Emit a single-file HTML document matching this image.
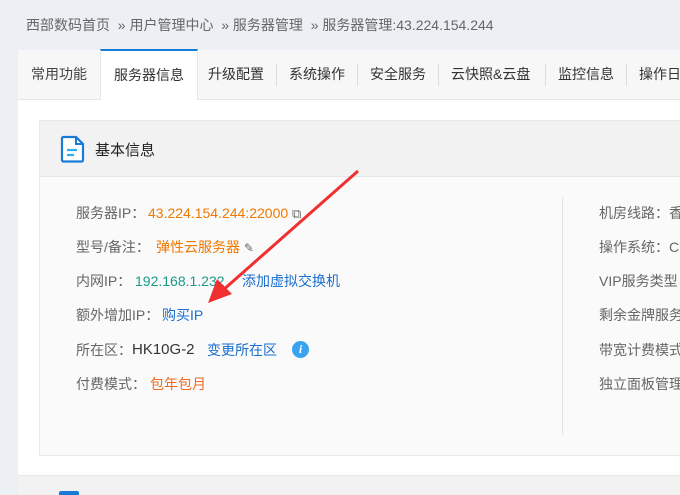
<html><head><style>
body{margin:0;width:680px;height:494px;overflow:hidden;background:#eceff3;font-family:"Liberation Sans","Noto Sans CJK SC",sans-serif;position:relative}
.a{position:absolute;white-space:nowrap}
.bc{top:15px;left:26px;font-size:14px;color:#666;line-height:20px}
.panel{position:absolute;left:18px;top:50px;width:662px;height:444px;background:#fff}
.tabs{position:absolute;left:0;top:0;width:662px;height:49px;background:#f7f7f7;border-bottom:1px solid #e6e6e6}
.tab{position:absolute;top:0;height:49px;line-height:49px;font-size:14px;color:#333;white-space:nowrap}
.sep{position:absolute;top:14px;width:1px;height:22px;background:#ddd}
.card{position:absolute;left:21px;top:70px;width:641px;height:334px;background:#fafafa;border:1px solid #e8e8e8;border-right:none}
.ch{position:absolute;left:0;top:0;width:641px;height:55px;background:#f2f2f2;border-bottom:1px solid #e6e6e6}
.r{font-size:14px;color:#666;line-height:20px;height:20px}
</style></head><body>
<div class="a bc">西部数码首页 &nbsp;» 用户管理中心 &nbsp;» 服务器管理 &nbsp;» 服务器管理:43.224.154.244</div>
<div class="panel">
<div class="tabs">
<div class="tab" style="left:13px;color:#444">常用功能</div>
<div class="tab" style="left:82px;width:96px;background:#fff;border-top:2px solid #1a7bd6;height:49px;top:-1px;text-align:center;line-height:48px;border-left:1px solid #e6e6e6;border-right:1px solid #e6e6e6">服务器信息</div>
<div class="tab" style="left:190px">升级配置</div><div class="sep" style="left:258px"></div>
<div class="tab" style="left:271px">系统操作</div><div class="sep" style="left:339px"></div>
<div class="tab" style="left:352px">安全服务</div><div class="sep" style="left:420px"></div>
<div class="tab" style="left:433px">云快照&amp;云盘</div><div class="sep" style="left:527px"></div>
<div class="tab" style="left:540px">监控信息</div><div class="sep" style="left:608px"></div>
<div class="tab" style="left:621px">操作日志</div>
</div>
<div class="card">
<div class="ch">
<svg class="a" style="left:20px;top:14px" width="26" height="28" viewBox="0 0 26 28"><path d="M3 2h13l7 7v16a1.5 1.5 0 0 1-1.5 1.5h-18A1.5 1.5 0 0 1 2 25V3.5A1.5 1.5 0 0 1 3 2z" fill="#fff" stroke="#1a7bd6" stroke-width="2.2"/><path d="M16 2v7h7" fill="none" stroke="#1a7bd6" stroke-width="2"/><path d="M7 15h10M7 20h7" stroke="#2fb0ee" stroke-width="2.2"/></svg>
<div class="a" style="left:55px;top:18px;font-size:15px;color:#222">基本信息</div>
</div>
<div class="a" style="left:522px;top:76px;width:1px;height:238px;background:#e4e4e4"></div>
</div>
<div class="a" style="left:0;top:425px;width:662px;height:19px;background:#f2f2f2;border-top:1px solid #e6e6e6"></div>
<div class="a" style="left:41px;top:441px;width:20px;height:4px;background:#1a7bd6;border-radius:2px 2px 0 0"></div>
</div>
<div class="a r" style="left:76px;top:203px">服务器IP：</div><div class="a r" style="left:148px;top:203px;color:#f07800">43.224.154.244:22000 <span style="color:#666;font-size:13px">⧉</span></div>
<div class="a r" style="left:76px;top:237px">型号/备注：</div><div class="a r" style="left:156px;top:237px;color:#f07800">弹性云服务器 <span style="color:#666;font-size:12px">✎</span></div>
<div class="a r" style="left:76px;top:271px">内网IP：</div><div class="a r" style="left:135px;top:271px;color:#1a9a8a">192.168.1.232</div><div class="a r" style="left:242px;top:271px;color:#1a6fd0">添加虚拟交换机</div>
<div class="a r" style="left:76px;top:305px">额外增加IP：</div><div class="a r" style="left:162px;top:305px;color:#1a6fd0">购买IP</div>
<div class="a r" style="left:76px;top:340px">所在区：</div><div class="a r" style="left:132px;top:340px;font-size:15px;color:#333">HK10G-2</div><div class="a r" style="left:207px;top:340px;color:#1a6fd0">变更所在区</div>
<div class="a" style="left:292px;top:341px;width:17px;height:17px;border-radius:50%;background:#3aa3f0;color:#fff;font:italic bold 12px 'Liberation Serif',serif;text-align:center;line-height:17px">i</div>
<div class="a r" style="left:76px;top:374px">付费模式：</div><div class="a r" style="left:150px;top:374px;color:#f06a20">包年包月</div>
<div class="a r" style="left:599px;top:203px">机房线路：香</div>
<div class="a r" style="left:599px;top:237px">操作系统：C</div>
<div class="a r" style="left:599px;top:271px">VIP服务类型：</div>
<div class="a r" style="left:599px;top:305px">剩余金牌服务</div>
<div class="a r" style="left:599px;top:340px">带宽计费模式</div>
<div class="a r" style="left:599px;top:374px">独立面板管理</div>
<svg class="a" style="left:0;top:0" width="680" height="494"><line x1="358" y1="171" x2="222" y2="291" stroke="#f03030" stroke-width="3"/><polygon points="208,303 217,279 232,294" fill="#f03030"/></svg>
</body></html>
